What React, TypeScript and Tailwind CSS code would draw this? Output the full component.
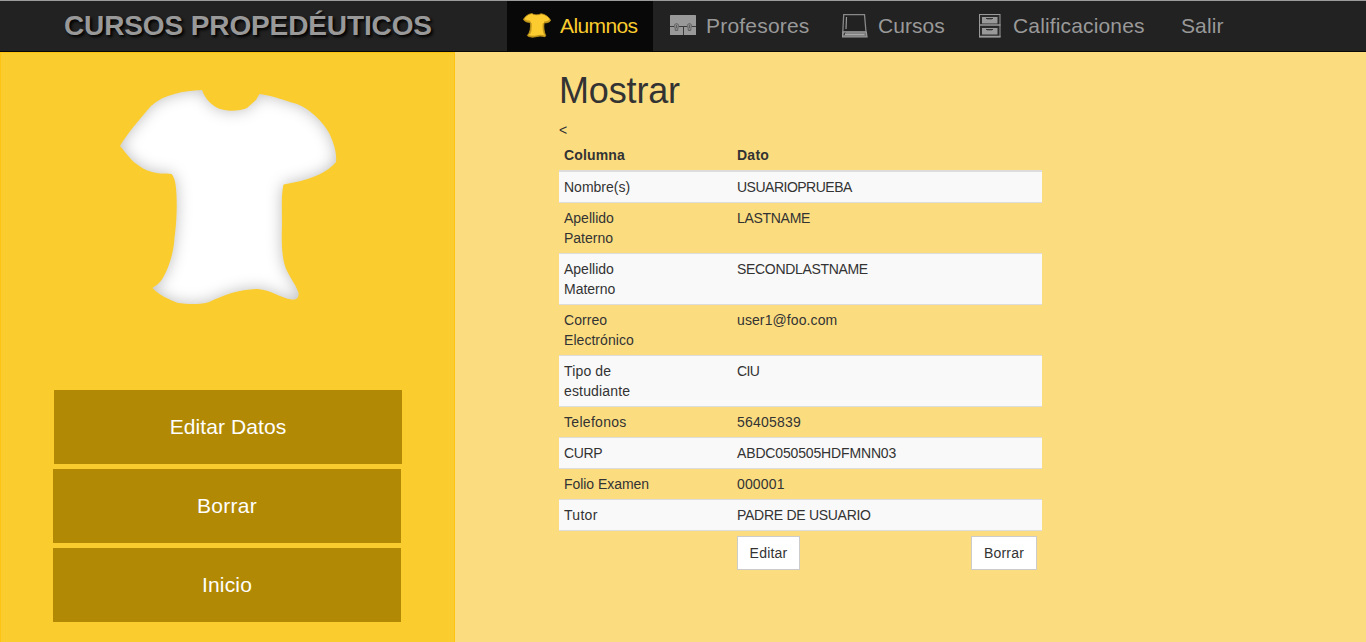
import React from "react";

const BIG_SHIRT =
  "M202 90 C205 99 212 106 220 109 C230 112 240 111 247 108 L256 100 L259.500 94 C275 96 285 101 297 104 C310 109 323 122 329 133 C333 141 337 152 336 162 C328 172 311 179 296 182 L283.500 184.500 C281 195 282 210 282 225 C281 250 283 263 287 271 C291 279 297 287 298.500 293 C299 298 296 300 292 299.500 C280 298 271 290 258 289 C240 289 224 295 209 302 C200 305 187 304 178 303 C168 299 159 295 152.500 288 C157 285 161 282 164 276 C170 265 174 250 174.500 238 C177 220 177 205 176.500 195 C176 184 175 178 171.500 174 L167 173.500 C155 174 146 171 138 165 C130 160 125 151 120 146 C127 134 139 120 151 106 C164 94 184 91 202 90 Z";

function BigShirt() {
  return (
    <svg className="block h-[226px] w-[218px]" viewBox="119 89 218 226">
      <defs>
        <clipPath id="shirt">
          <path d={BIG_SHIRT} />
        </clipPath>
        <filter id="soft" x="-10%" y="-10%" width="120%" height="120%">
          <feGaussianBlur stdDeviation="7.5" />
        </filter>
      </defs>
      <path d={BIG_SHIRT} fill="#ffffff" />
      <g clipPath="url(#shirt)">
        <path d={"M60 30H400V370H60Z " + BIG_SHIRT} fillRule="evenodd" fill="#000000" fillOpacity="0.26" filter="url(#soft)" />
      </g>
    </svg>
  );
}

function ShirtIcon() {
  return (
    <svg className="block h-[25px] w-[28px]" viewBox="0 0 28 25">
      <path
        d="M9 .5C10.500 2.200 16 2.200 18 .7C22.500 1.300 26 4 27.700 7.500C27 9 24.500 10 21 10C20.500 15 21 19 22.700 22.500L22 23.800C19 23 17 22.500 14 23.500C10 24.500 7 24.500 4.300 22.500C7 20 8 15 7.300 9.500C4 9.500 2 8.500 .3 6.500C2.500 3 5 1 9 .5Z"
        fill="#fbcb30"
        stroke="#b58c17"
        strokeWidth=".8"
      />
      <path d="M5 22.500C8 24 11 23.700 14 22.900S20 22.500 22.200 23.200M1 6.500C3 8.500 5 8.500 7.300 8.500M21 9.200C24 9.200 26 8.200 27 7.200M8 10C8.300 14 8 18 6.500 21M20.500 10.500C20 15 20.500 19 21.700 21.500" fill="none" stroke="#b58c17" strokeOpacity=".75" strokeWidth="1.500" />
    </svg>
  );
}

function BriefcaseIcon() {
  return (
    <svg className="block h-[20px] w-[26px]" viewBox="0 0 26 20">
      <rect width="26" height="20" rx=".5" fill="#999999" />
      <path d="M0 11.500H4M9 11.500H17M22 11.500H26M13.500 11.500V20" stroke="#3c3c3c" fill="none" />
      <path d="M9 11.500H17" stroke="#3c3c3c" />
      <path d="M4.500 10.500C4.500 8 8.500 8 8.500 10.500C8.500 12.500 7.700 12.500 7.700 15.500H5.300C5.300 12.500 4.500 12.500 4.500 10.500ZM17.500 10.500C17.500 8 21.500 8 21.500 10.500C21.500 12.500 20.700 12.500 20.700 15.500H18.300C18.300 12.500 17.500 12.500 17.500 10.500Z" fill="#8a8a8a" stroke="#606060" />
      <path d="M6.500 10V13M19.500 10V13" stroke="#606060" />
    </svg>
  );
}

function BookIcon() {
  return (
    <svg className="block h-[24px] w-[26px]" viewBox="0 0 26 24">
      <path d="M1.700 .7H22.500L24 18H.8Z" fill="#222222" stroke="#888888" strokeWidth="1.300" />
      <path d="M4.500 3L4 15" fill="none" stroke="#999999" strokeWidth="1.200" />
      <path d="M.8 18H24.300L25 22.800H.5Z" fill="#777777" stroke="#999999" strokeWidth="1.200" />
      <path d="M3 20.500H22.500" stroke="#aaaaaa" strokeWidth="1.500" />
      <path d="M3 18.500L2 21" stroke="#333333" />
    </svg>
  );
}

function CabinetIcon() {
  return (
    <svg className="block h-[24px] w-[22px]" viewBox="0 0 22 24">
      <rect x=".5" y=".5" width="20.500" height="22.500" fill="#2b2b2b" stroke="#999999" />
      <path d="M0 11H21.500M0 22.500H21.500" stroke="#999999" strokeWidth="1.500" />
      <rect x="3" y="3" width="15.500" height="6.500" fill="#999999" />
      <rect x="3" y="14" width="15.500" height="6.500" fill="#999999" />
      <path d="M7 4.500H14M7 15.500H14" fill="none" stroke="#333333" />
      <path d="M8 5.500H13M8 16.500H13" fill="none" stroke="#777777" />
    </svg>
  );
}

const rows = [
  { label: ["Nombre(s)"], value: "USUARIOPRUEBA", ls: "", vs: "tracking-[-0.5px]" },
  { label: ["Apellido", "Paterno"], value: "LASTNAME", ls: "", vs: "tracking-[-0.3px]" },
  { label: ["Apellido", "Materno"], value: "SECONDLASTNAME", ls: "", vs: "tracking-[-0.32px]" },
  { label: ["Correo", "Electrónico"], value: "user1@foo.com", ls: "tracking-[0.05px]", vs: "tracking-[0.1px]" },
  { label: ["Tipo de", "estudiante"], value: "CIU", ls: "tracking-[0.15px]", vs: "tracking-[-0.6px]" },
  { label: ["Telefonos"], value: "56405839", ls: "tracking-[0.3px]", vs: "tracking-[0.21px]" },
  { label: ["CURP"], value: "ABDC050505HDFMNN03", ls: "tracking-[-0.35px]", vs: "tracking-[-0.15px]" },
  { label: ["Folio Examen"], value: "000001", ls: "tracking-[-0.05px]", vs: "tracking-[0.15px]" },
  { label: ["Tutor"], value: "PADRE DE USUARIO", ls: "tracking-[0.3px]", vs: "tracking-[-0.28px]" },
];

export default function App() {
  return (
    <div className="flex h-[642px] w-[1366px] flex-col overflow-hidden bg-[#fbdd80] font-['Liberation_Sans',Arial,sans-serif] text-sm leading-5 text-[#333333]">
      <header className="flex h-[52px] shrink-0 border-t border-b border-t-[#9c9c9c] border-b-[#080808] bg-[#222222] text-[21px] leading-[50px] whitespace-nowrap text-[#999999]">
        <h1 className="w-[507px] pl-[64px] text-[28px] leading-[49px] font-bold tracking-[-0.12px] [text-shadow:2px_2px_3px_#000000]">CURSOS PROPEDÉUTICOS</h1>
        <nav className="flex">
          <a className="flex w-[146px] bg-[#080808] pl-4 text-[#facc2e]">
            <span className="w-[37px] pt-3"><ShirtIcon /></span>
            <span className="tracking-[-0.6px]">Alumnos</span>
          </a>
          <a className="flex w-[172px] pl-[17px]">
            <span className="w-[36px] pt-[14px]"><BriefcaseIcon /></span>
            <span className="tracking-[0.2px]">Profesores</span>
          </a>
          <a className="flex w-[137px] pl-[17px]">
            <span className="w-[36px] pt-[13px]"><BookIcon /></span>
            <span className="tracking-[0.05px]">Cursos</span>
          </a>
          <a className="flex w-[202px] pl-[17px]">
            <span className="w-[34px] pt-[13px]"><CabinetIcon /></span>
            <span className="tracking-[0.15px]">Calificaciones</span>
          </a>
          <a className="pl-[17px] tracking-[0.1px]">Salir</a>
        </nav>
      </header>
      <div className="flex flex-1">
        <aside className="w-[455px] shrink-0 border border-b-0 border-[#fdc411] bg-[#facc2e]">
          <div className="h-[337px] pt-9 pl-[118px]">
            <BigShirt />
          </div>
          <div className="flex flex-col gap-[5px] pl-[52px] text-center text-[21px] leading-[74px] text-white">
            <a className="ml-px h-[74px] w-[348px] bg-[#b18904] tracking-[0.08px]">Editar Datos</a>
            <a className="h-[74px] w-[348px] bg-[#b18904] tracking-[0.25px]">Borrar</a>
            <a className="h-[74px] w-[348px] bg-[#b18904] tracking-[0.15px]">Inicio</a>
          </div>
        </aside>
        <main className="w-[587px] pt-[19px] pl-[104px]">
          <h2 className="h-[49px] text-[36px] leading-[40px] tracking-[-0.15px]">Mostrar</h2>
          <p className="h-5">&lt;</p>
          <div className="flex h-8 border-b-2 border-[#dddddd] p-[5px] font-bold">
            <span className="w-[173px] tracking-[0.15px]">Columna</span>
            <span className="tracking-[0.25px]">Dato</span>
          </div>
          {rows.map((r, i) => (
            <div
              key={r.value}
              className={
                i % 2 === 0
                  ? "flex border-b border-[#dddddd] bg-[#f9f9f9] p-[5px]"
                  : "flex border-b border-[#dddddd] p-[5px]"
              }
            >
              <div className={"w-[173px] " + r.ls}>
                {r.label.map((line) => (
                  <div key={line}>{line}</div>
                ))}
              </div>
              <div className={r.vs}>{r.value}</div>
            </div>
          ))}
          <div className="flex justify-between pt-[5px] pr-[5px] pl-[178px] tracking-[0.2px]">
            <button className="h-[34px] w-[63px] border border-[#cccccc] bg-white">Editar</button>
            <button className="h-[34px] w-[66px] border border-[#cccccc] bg-white">Borrar</button>
          </div>
        </main>
      </div>
    </div>
  );
}
